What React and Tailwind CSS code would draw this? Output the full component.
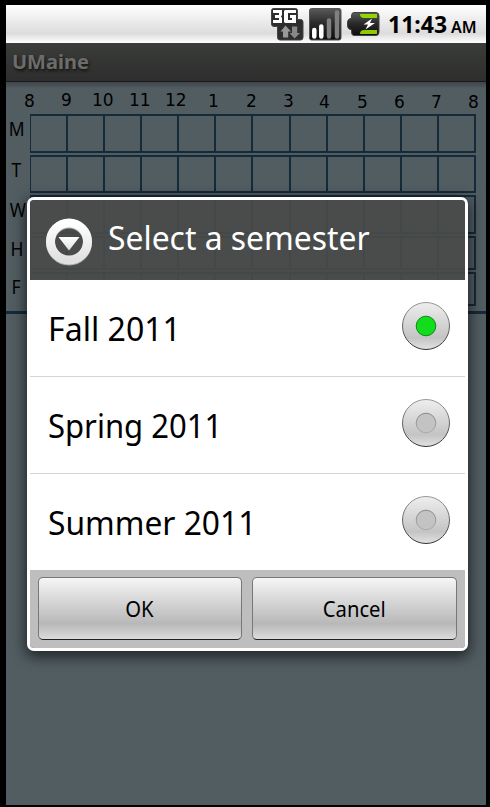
import React from 'react';

const hours = [
  ['8', 'left-[18px] top-[9px]'],
  ['9', 'left-[55px] top-[8px]'],
  ['10', 'left-[86px] top-[8px]'],
  ['11', 'left-[123px] top-[8px]'],
  ['12', 'left-[159px] top-[8px]'],
  ['1', 'left-[202px] top-[9px]'],
  ['2', 'left-[240px] top-[9px]'],
  ['3', 'left-[277px] top-[9px]'],
  ['4', 'left-[313px] top-[10px]'],
  ['5', 'left-[351px] top-[10px]'],
  ['6', 'left-[388px] top-[10px]'],
  ['7', 'left-[425px] top-[10px]'],
  ['8', 'left-[462px] top-[10px]'],
];

const days = [
  ['M', 'h-[39px] mb-[2px]', 'top-[3px] left-[2px]'],
  ['T', 'h-[38px] mb-[2px]', 'top-[3px] left-[5px]'],
  ['W', 'h-[39px] mb-[2px]', 'top-[3px] left-[3px]'],
  ['H', 'h-[34px] mb-[2px]', 'top-[1px] left-[4px]'],
  ['F', 'h-[34px]', 'top-[3px] left-[5px]'],
];

function NetworkIcon() {
  return (
    <svg width="33" height="33" viewBox="0 0 33 33">
      <defs>
        <linearGradient id="chip" x1="0" y1="0" x2="0" y2="1">
          <stop offset="0" stopColor="#5a5a5a" />
          <stop offset="0.45" stopColor="#2c2c2c" />
          <stop offset="1" stopColor="#0c0c0c" />
        </linearGradient>
      </defs>
      <path d="M2.500 .5H24.500Q26.500 .5 26.500 2.500V11.500H29.500Q32 11.500 32 14V29.500Q32 32 29.500 32H9Q6.500 32 6.500 29.500V18.500H3Q.5 18.500 .5 16V2.500Q.5 .5 2.500 .5Z" fill="#2e2e2e" stroke="#444" />
      <path d="M2 2H11V7L10 8.500L11 10V15H2V12H8V10H4V7H8V5H2Z" fill="#fff" />
      <path d="M14 2H25V5H17V12H21V10H19V7H25V15H14L13 14V3Z" fill="#fff" />
      <path d="M14.500 17.500L20 23.500H17.200V29.500H12V23.500H9.500Z" fill="#999" />
      <path d="M23.500 30.500L29 25H26.200V18.500H21V25H18.500Z" fill="#888" />
    </svg>
  );
}

function SignalIcon() {
  return (
    <svg width="33" height="33" viewBox="0 0 33 33">
      <rect x=".5" y=".5" width="31.500" height="31.500" rx="2" fill="url(#chip)" stroke="#555" />
      <g strokeWidth="4.500" strokeLinecap="round">
        <path d="M5.300 22V28.500M12.300 18.500V28.500" stroke="#fff" />
        <path d="M20 12.500V28.500M28 4.500V28.500" stroke="#808080" />
      </g>
    </svg>
  );
}

function BatteryIcon() {
  return (
    <svg width="33" height="24" viewBox="0 0 33 24">
      <path d="M7 .5H29Q32 .5 32 4V20Q32 23.500 29 23.500H7Q4.500 23.500 4.500 20V18Q.5 17 .5 14V10Q.5 7 4.500 6V4Q4.500 .5 7 .5Z" fill="url(#chip)" stroke="#444" />
      <path d="M13 2H30V6H17Q13 6 13 2Z" fill="#91d600" />
      <path d="M13 22H30V18H17Q13 18 13 22Z" fill="#91c800" />
      <path d="M25 6.500L16.500 12.500H21L18.500 17.500L28 11H23Z" fill="#fff" />
    </svg>
  );
}

function Radio({ on, id }) {
  return (
    <svg width="50" height="50" viewBox="0 0 50 50">
      <defs>
        <linearGradient id={id + 'f'} x1="0" y1="0" x2="0" y2="1">
          <stop offset="0" stopColor="#eee" />
          <stop offset="0.750" stopColor="#c4c4c4" />
          <stop offset="1" stopColor="#e2e2e2" />
        </linearGradient>
        <linearGradient id={id + 's'} x1="0" y1="0" x2="0" y2="1">
          <stop offset="0" stopColor="#999" />
          <stop offset="1" stopColor="#333" />
        </linearGradient>
        <linearGradient id={id + 'd'} x1="0" y1="0" x2="0" y2="1">
          <stop offset="0" stopColor="#888" />
          <stop offset="1" stopColor="#aaa" />
        </linearGradient>
      </defs>
      <circle cx="25" cy="25" r="23.500" fill={`url(#${id}f)`} stroke={`url(#${id}s)`} />
      <circle cx="25" cy="25" r="9.800" fill={on ? '#12dc1c' : '#c3c3c3'} stroke={on ? '#0f8a14' : `url(#${id}d)`} />
    </svg>
  );
}

function Option({ label, on, id, last, fit }) {
  return (
    <div className={`flex items-center justify-between pl-[18px] pr-[14px] ${last ? 'h-[96px]' : 'h-[97px] border-b border-[#d4d4d4]'}`}>
      <span className={`relative top-[1px] origin-left text-[33px] leading-[48px] text-black whitespace-nowrap ${fit}`}>{label}</span>
      <span className="relative -top-[2px]"><Radio on={on} id={id} /></span>
    </div>
  );
}

function Button({ children, width }) {
  return (
    <button className={`${width} h-[63px] rounded-[5px] border border-[#777] border-b-[#222] bg-linear-to-b from-[#f6f6f6] via-[#b8b8b8] via-75% to-[#dcdcdc] text-[22px] text-black`}>
      <span className="inline-block scale-x-[0.92]">{children}</span>
    </button>
  );
}

export default function App() {
  return (
    <div className="relative h-[807px] w-[490px] overflow-hidden bg-black pt-[5px] pl-[6px] font-['Noto_Sans',sans-serif]">
      <div className="flex h-[800px] w-[480px] flex-col bg-[#525d62]">
        <div className="flex h-[38px] shrink-0 items-center bg-linear-to-b from-white via-[#dcdcdc] via-75% to-white pl-[265px]">
          <NetworkIcon />
          <span className="ml-[5px]"><SignalIcon /></span>
          <span className="ml-[5px]"><BatteryIcon /></span>
          <span className="ml-[8px] flex items-baseline whitespace-nowrap text-black">
            <span className="text-[23px] font-bold leading-[38px]">11:43</span>
            <span className="ml-[4px] text-[16px] font-semibold">AM</span>
          </span>
        </div>
        <div className="flex h-[39px] shrink-0 items-center border-b border-[#181818] bg-linear-to-b from-[#3b3d3a] to-[#2d2e2d] pl-[6px] text-[20px] font-bold text-[#6c6d6b] [text-shadow:1px_2px_3px_#111]">
          UMaine
        </div>
        <div className="h-[7px] shrink-0 bg-linear-to-b from-[#3f454b] to-[#525d62]" />
        <div className="relative -mt-[7px] h-[32px] shrink-0 font-['DejaVu_Sans',sans-serif] text-[17px] leading-[20px] text-black">
          {hours.map(([h, pos], i) => (
            <span key={i} className={`absolute ${pos}`}>{h}</span>
          ))}
        </div>
        <div className="h-[200px] shrink-0 border-b-[3px] border-[#152b3a]">
          {days.map(([d, size, pos]) => (
            <div key={d} className={`flex ${size}`}>
              <span className="w-[24px] shrink-0 text-[19px] leading-[24px] text-black">
                <span className={`relative inline-block scale-x-[0.92] ${pos}`}>{d}</span>
              </span>
              <div className="flex w-[446px] border-y-2 border-l border-[#152b3a]">
                {Array.from({ length: 12 }, (_, i) => (
                  <div key={i} className="flex-1 border-r-2 border-[#152b3a]" />
                ))}
              </div>
            </div>
          ))}
        </div>
      </div>

      <div className="absolute left-[27px] top-[197px] flex h-[454px] w-[441px] flex-col overflow-hidden rounded-[7px] border-[3px] border-white shadow-[0_4px_14px_2px_rgba(0,0,0,0.6)]">
        <div className="flex h-[80px] shrink-0 items-center bg-[#4a4b4a]/92 pl-[15px]">
          <svg className="relative top-[2px]" width="48" height="48" viewBox="0 0 48 48">
            <defs>
              <linearGradient id="ring" x1="0" y1="0" x2="0" y2="1">
                <stop offset="0" stopColor="#fff" />
                <stop offset="1" stopColor="#e0e0e0" />
              </linearGradient>
            </defs>
            <circle cx="24" cy="24.500" r="18.500" fill="none" stroke="#aaa" strokeWidth="9" />
            <circle cx="24" cy="23.500" r="18.500" fill="none" stroke="url(#ring)" strokeWidth="9" />
            <path d="M13.500 19H34.500L24 32.500Z" fill="url(#ring)" />
          </svg>
          <span className="relative -top-[2px] ml-[15px] origin-left scale-x-[0.965] whitespace-nowrap text-[33px] text-white">Select a semester</span>
        </div>
        <div className="h-[290px] shrink-0 bg-white">
          <Option label="Fall 2011" on id="fall" fit="scale-x-[0.972]" />
          <Option label="Spring 2011" id="spring" fit="scale-x-[0.94]" />
          <Option label="Summer 2011" id="summer" last fit="scale-x-[0.962]" />
        </div>
        <div className="flex h-[78px] shrink-0 items-start gap-[10px] bg-[#bebebe] pl-[8px] pt-[7px]">
          <Button width="w-[204px] pr-[2px]">OK</Button>
          <Button width="w-[205px]">Cancel</Button>
        </div>
      </div>
    </div>
  );
}
